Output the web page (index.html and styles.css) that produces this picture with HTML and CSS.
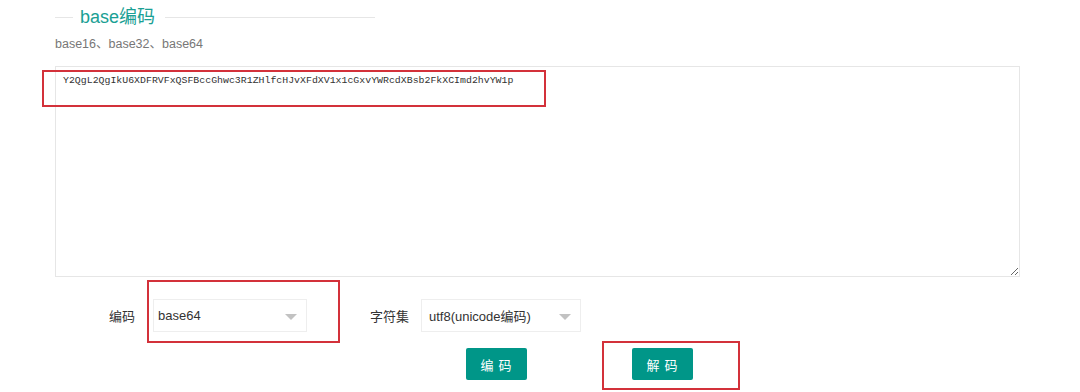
FILE: index.html
```html
<!DOCTYPE html>
<html lang="zh">
<head>
<meta charset="utf-8">
<title>base编码</title>
<link rel="stylesheet" href="styles.css">
</head>
<body>
<div class="page">
  <div class="legend">
    <span class="legend-line short"></span>
    <span class="legend-title">base编码</span>
    <span class="legend-line long"></span>
  </div>
  <p class="subtitle">base16、base32、base64</p>
  <div class="area-wrap">
    <textarea class="code-area" readonly>Y2QgL2QgIkU6XDFRVFxQSFBccGhwc3R1ZHlfcHJvXFdXV1x1cGxvYWRcdXBsb2FkXCImd2hvYW1p</textarea>
    <div class="mark mark-text"></div>
  </div>
  <div class="form-row">
    <label class="form-label first">编码</label>
    <div class="select-wrap">
      <div class="select s1"><span>base64</span><i class="caret"></i></div>
      <div class="mark mark-select"></div>
    </div>
    <label class="form-label second">字符集</label>
    <div class="select s2"><span>utf8(unicode编码)</span><i class="caret"></i></div>
  </div>
  <div class="btn-row">
    <button class="btn">编&nbsp;码</button>
    <div class="btn-wrap">
      <button class="btn">解&nbsp;码</button>
      <div class="mark mark-btn"></div>
    </div>
  </div>
</div>
</body>
</html>
```

FILE: styles.css
```css
html, body {
  margin: 0;
  padding: 0;
  background: #ffffff;
}
body {
  font-family: "Microsoft YaHei", "Liberation Sans", "Noto Sans CJK SC", sans-serif;
  color: #333;
  width: 1080px;
  height: 392px;
  overflow: hidden;
}
.page {
  padding-left: 55px;
  padding-top: 6px;
}
.legend {
  display: flex;
  align-items: center;
  width: 320px;
  height: 22px;
}
.legend-line {
  height: 1px;
  background: #e6e6e6;
}
.legend-line.short {
  width: 18px;
}
.legend-line.long {
  flex: 1;
}
.legend-title {
  font-size: 18px;
  color: #1aa094;
  padding: 0 10px 0 7px;
  line-height: 22px;
}
.subtitle {
  margin: 7px 0 0 0;
  font-size: 12.5px;
  color: #777;
  line-height: 18px;
}
.area-wrap {
  position: relative;
  margin-top: 13px;
  width: 965px;
}
.code-area {
  display: block;
  box-sizing: border-box;
  width: 965px;
  height: 211px;
  margin: 0;
  border: 1px solid #e6e6e6;
  padding: 6px 7px;
  font-family: "Liberation Mono", monospace;
  font-size: 9.9px;
  line-height: 16px;
  color: #333;
  resize: vertical;
  outline: none;
  background: #fff;
}
.mark {
  position: absolute;
  border: 2px solid #d3313a;
  box-sizing: border-box;
  pointer-events: none;
}
.mark-text {
  left: -13px;
  top: 4px;
  width: 504px;
  height: 37px;
}
.form-row {
  display: flex;
  align-items: center;
  margin-top: 22px;
  height: 33px;
}
.form-label {
  box-sizing: border-box;
  text-align: right;
  font-size: 13px;
  color: #333;
}
.form-label.first {
  width: 98px;
  padding-right: 18px;
}
.form-label.second {
  width: 114px;
  padding-right: 12px;
}
.select-wrap {
  position: relative;
}
.select {
  box-sizing: border-box;
  height: 33px;
  border: 1px solid #eeeeee;
  display: flex;
  align-items: center;
  justify-content: space-between;
  padding: 0 9px 0 4px;
  font-size: 13px;
  color: #333;
  background: #fff;
}
.s1 {
  width: 154px;
}
.s2 {
  width: 160px;
  padding-left: 7px;
}
.caret {
  width: 0;
  height: 0;
  border-left: 6px solid transparent;
  border-right: 6px solid transparent;
  border-top: 6px solid #c2c2c2;
  margin-top: 2px;
}
.mark-select {
  left: -6px;
  top: -19px;
  width: 193px;
  height: 63px;
}
.btn-row {
  display: flex;
  align-items: flex-start;
  margin-top: 16px;
  padding-left: 411px;
  gap: 105px;
}
.btn-wrap {
  position: relative;
}
.btn {
  width: 61px;
  height: 32px;
  border: none;
  border-radius: 2px;
  background: #009688;
  color: #fff;
  font-family: "Microsoft YaHei", "Noto Sans CJK SC", sans-serif;
  font-size: 13px;
  letter-spacing: 1px;
  padding: 0;
  cursor: pointer;
}
.mark-btn {
  left: -30px;
  top: -7px;
  width: 138px;
  height: 49px;
}
```
